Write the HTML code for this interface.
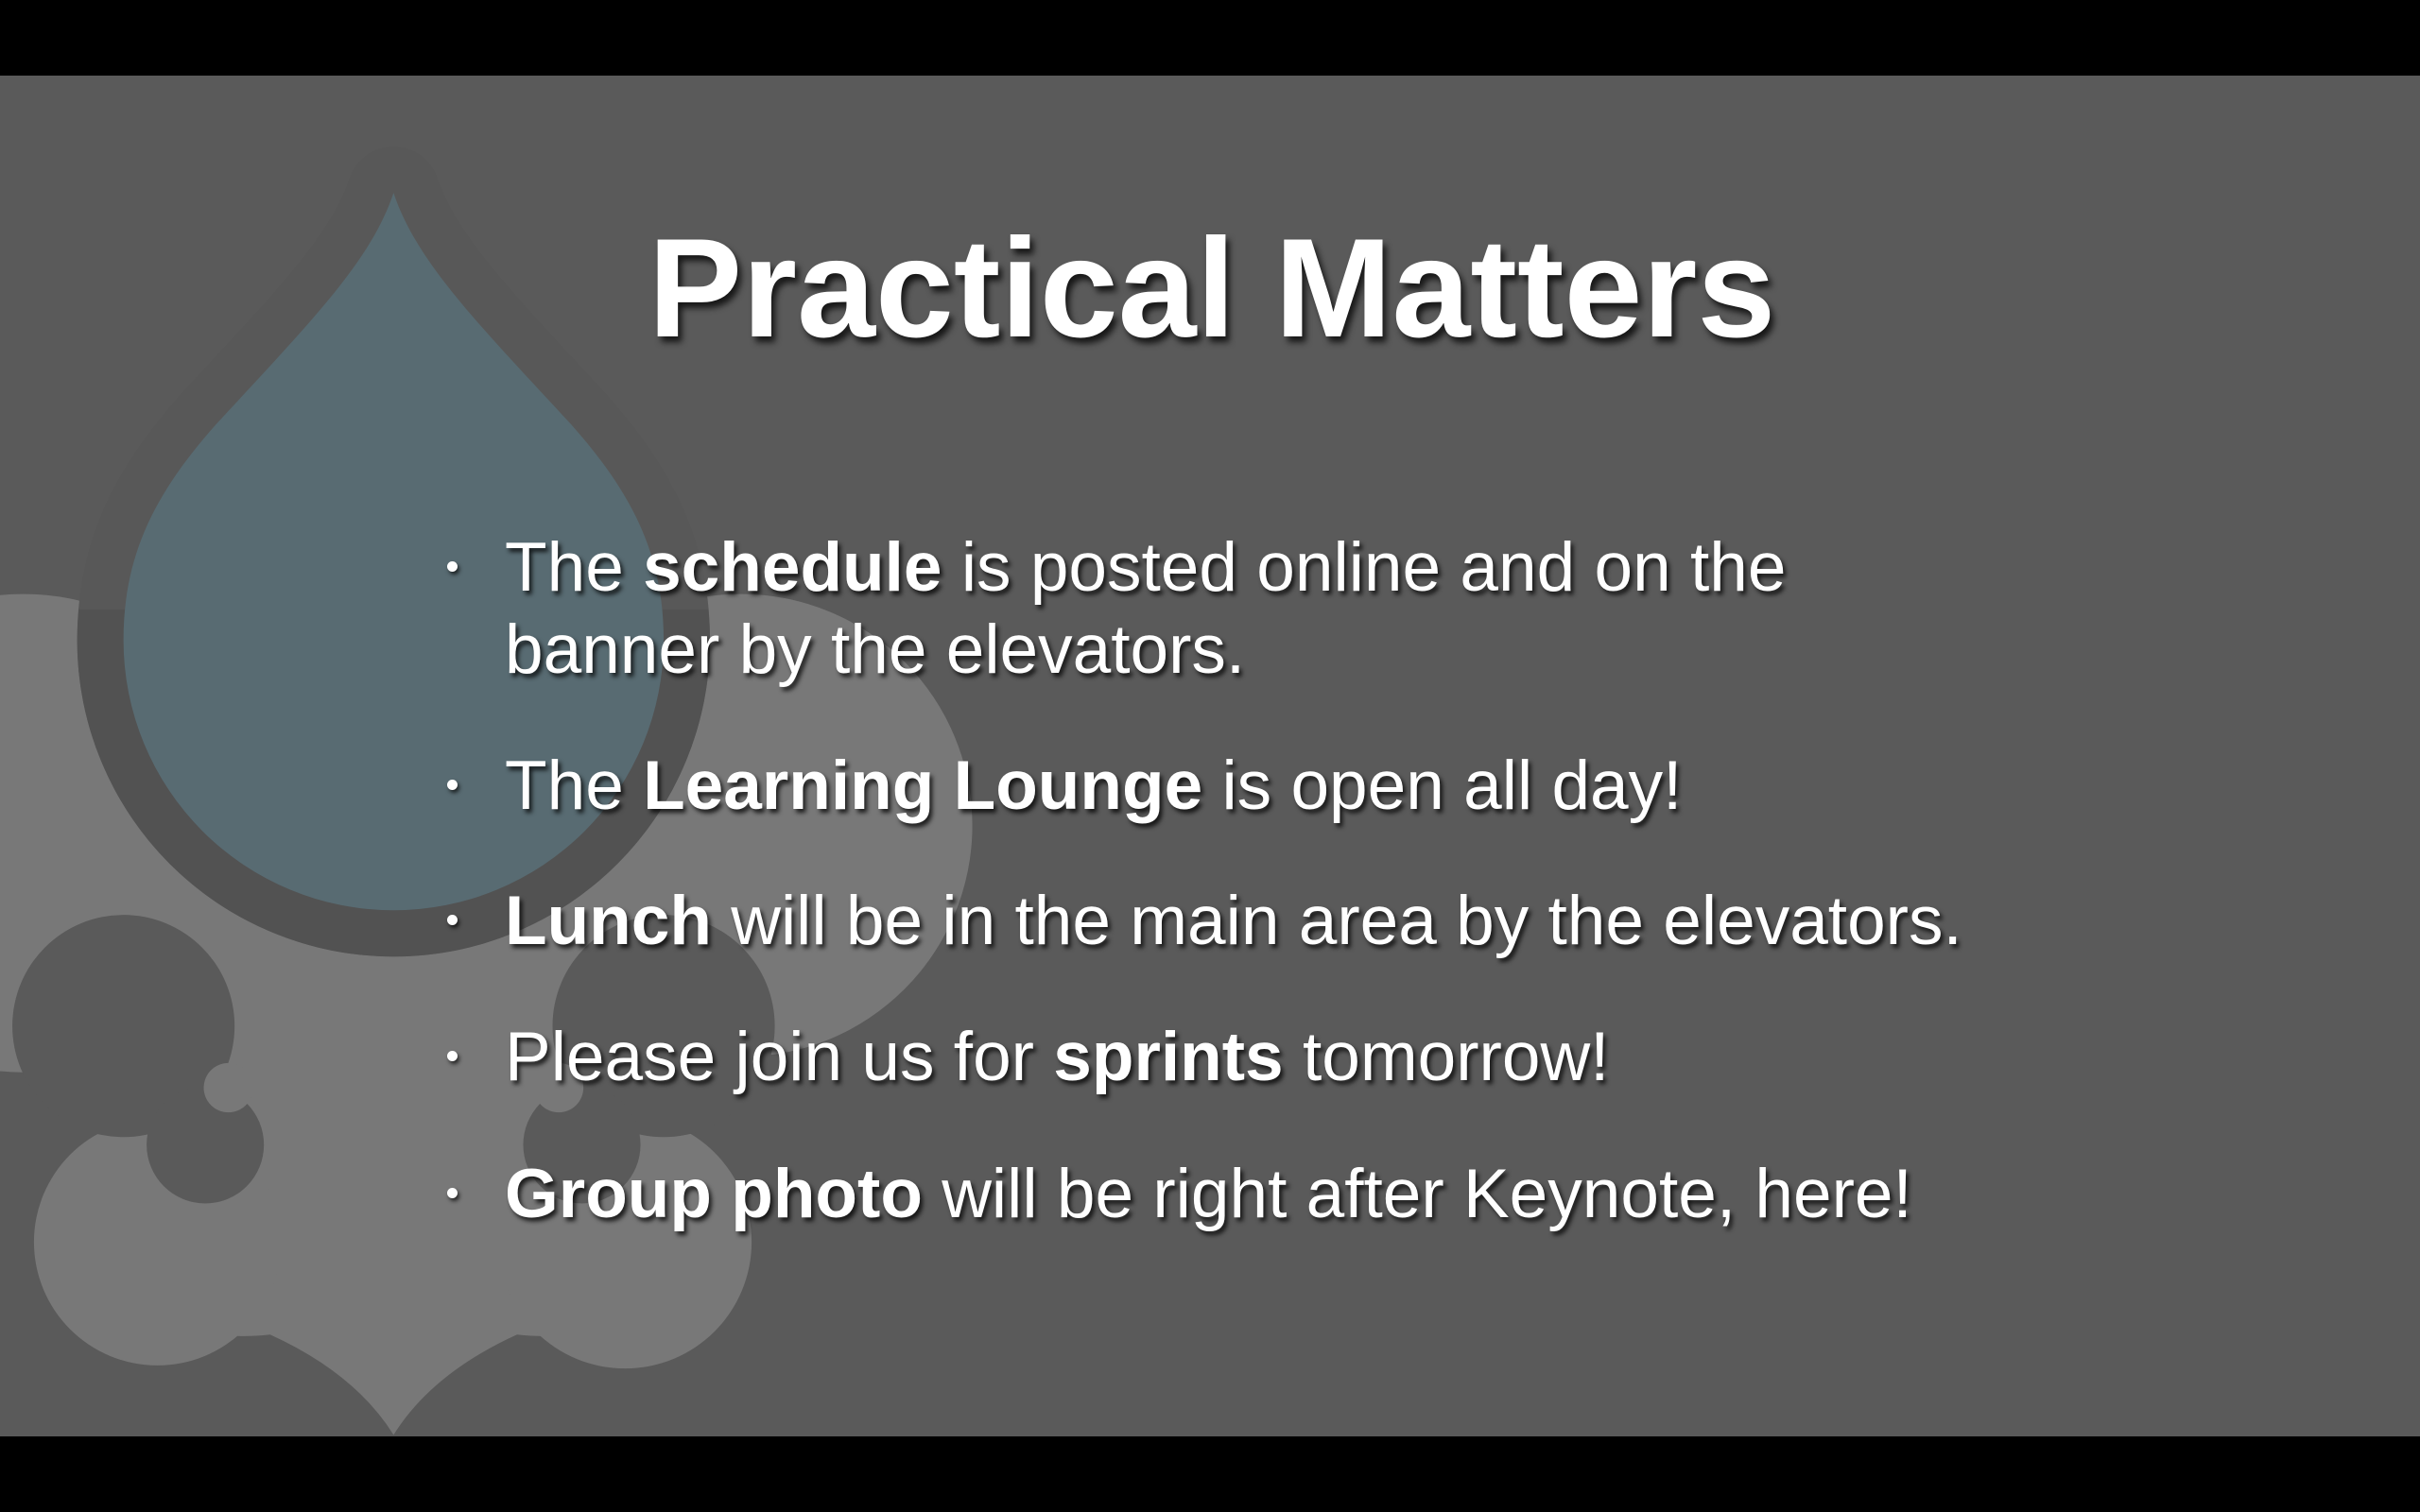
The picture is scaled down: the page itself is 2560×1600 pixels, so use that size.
<!DOCTYPE html>
<html><head><meta charset="utf-8"><style>
html,body{margin:0;padding:0}
body{width:2560px;height:1600px;background:#000;position:relative;overflow:hidden;font-family:"Liberation Sans",Arial,sans-serif}
svg{position:absolute;left:0;top:0}
.t{position:absolute;color:#fff;white-space:nowrap;line-height:1;text-shadow:3px 4px 5px rgba(0,0,0,.75)}
h1{position:absolute;margin:0;left:0;width:2564px;text-align:center;top:230px;font-size:149px;line-height:1;color:#fff;font-weight:bold;text-shadow:4px 6px 7px rgba(0,0,0,.75)}
.l{font-size:73px;left:534px}
.d{position:absolute;left:473px;width:11px;height:11px;border-radius:50%;background:#fff;box-shadow:2px 3px 4px rgba(0,0,0,.7)}
b{font-weight:bold}
</style></head><body>
<div style="position:absolute;left:0;top:0;width:2560px;height:1600px">
<svg width="2560" height="1600" viewBox="0 0 1568 980">
<defs><clipPath id="c"><rect x="0" y="395" width="700" height="400"/></clipPath></defs>
<rect x="0" y="49" width="1568" height="882" fill="#5a5a5a"/>
<g fill="#787878">
<circle cx="15" cy="540" r="155"/>
<circle cx="480" cy="535" r="150"/>
<path d="M100,560 L410,560 L410,850 Q380,870 335,865 Q280,890 255,930 Q230,890 175,865 Q130,870 100,850 Z"/>
<circle cx="102" cy="805" r="80"/>
<circle cx="405" cy="805" r="82"/>
</g>
<g fill="#5a5a5a">
<circle cx="80" cy="665" r="72"/>
<circle cx="133" cy="742" r="38"/>
<circle cx="430" cy="665" r="72"/>
<circle cx="377" cy="742" r="38"/>
</g>
<g fill="#787878">
<circle cx="148" cy="705" r="16"/>
<circle cx="362" cy="705" r="16"/>
</g>
<path d="M255,125 C240,170 200,210 140,275 C100,320 80,360 80,415 A175,175 0 0 0 430,415 C430,360 410,320 370,275 C310,210 270,170 255,125 Z" fill="#585858" stroke="#585858" stroke-width="60" stroke-linejoin="round"/>
<circle cx="255" cy="415" r="205" fill="#525252" clip-path="url(#c)"/>
<path d="M255,125 C240,170 200,210 140,275 C100,320 80,360 80,415 A175,175 0 0 0 430,415 C430,360 410,320 370,275 C310,210 270,170 255,125 Z" fill="#586b72"/>
<rect x="0" y="0" width="1568" height="49" fill="#000"/>
<rect x="0" y="931" width="1568" height="49" fill="#000"/>
</svg>
</div>
<h1>Practical Matters</h1>
<div class="d" style="top:594px"></div>
<div class="t l" style="top:564px">The <b>schedule</b> is posted online and on the</div>
<div class="t l" style="top:651px">banner by the elevators.</div>
<div class="d" style="top:825px"></div>
<div class="t l" style="top:795px">The <b>Learning Lounge</b> is open all day!</div>
<div class="d" style="top:968px"></div>
<div class="t l" style="top:938px"><b>Lunch</b> will be in the main area by the elevators.</div>
<div class="d" style="top:1112px"></div>
<div class="t l" style="top:1082px">Please join us for <b>sprints</b> tomorrow!</div>
<div class="d" style="top:1257px"></div>
<div class="t l" style="top:1227px"><b>Group photo</b> will be right after Keynote, here!</div>
</body></html>
